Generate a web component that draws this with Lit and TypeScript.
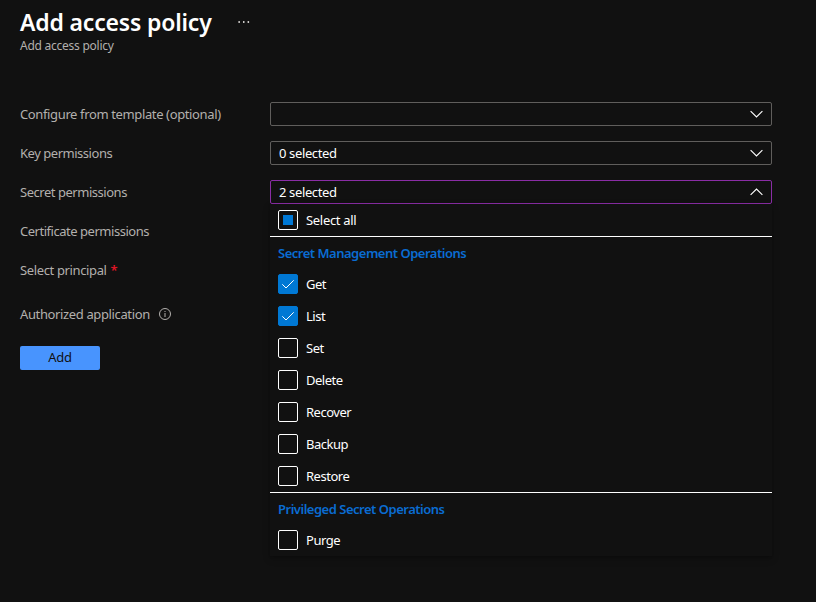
import { LitElement, html, css, svg } from "lit";
import { customElement, property } from "lit/decorators.js";
import { classMap } from "lit/directives/class-map.js";

type CheckState = "on" | "off" | "mixed";

@customElement("check-row")
class CheckRow extends LitElement {
  @property() label = "";
  @property() state: CheckState = "off";

  static styles = css`
    :host { display: flex; align-items: center; height: 32px; padding-left: 8px; gap: 8px; box-sizing: border-box; }
    .box { width: 20px; height: 20px; box-sizing: border-box; border: 1px solid #fff; border-radius: 2px; display: flex; align-items: center; justify-content: center; flex: none; }
    .box.on { background: #0078d4; border-color: #0078d4; }
    .fill { width: 10px; height: 10px; background: #0078d4; }
    svg { display: block; flex: none; }
    .text { color: #fff; line-height: 18px; white-space: nowrap; letter-spacing: -0.48px; }
    .text.mixed { letter-spacing: -0.31px; }
  `;

  render() {
    return html`
      <span class=${classMap({ box: true, on: this.state === "on" })}>
        ${this.state === "mixed" ? html`<span class="fill"></span>` : ""}
        ${this.state === "on"
          ? html`<svg width="18" height="18" viewBox="0 0 18 18" fill="none" stroke="#fff" stroke-width="1"><path d="M3.3 9.3L7 13L14.7 5.3" /></svg>`
          : ""}
      </span>
      <span class=${classMap({ text: true, mixed: this.state === "mixed" })}>${this.label}</span>
    `;
  }
}

@customElement("select-box")
class SelectBox extends LitElement {
  @property() value = "";
  @property({ type: Boolean }) open = false;

  static styles = css`
    :host { display: block; position: relative; width: 502px; }
    .field { height: 24px; box-sizing: border-box; border: 1px solid #605e5c; border-radius: 2px; display: flex; align-items: center; justify-content: space-between; padding: 0 8px; color: #fff; }
    .field.open { border-color: #8a2da5; }
    .value { line-height: 18px; letter-spacing: -0.37px; }
    svg { display: block; }
    .menu { position: absolute; top: 24px; left: 0; right: 0; background: #111; box-shadow: 0 3px 7px rgba(0, 0, 0, 0.22), 0 1px 2px rgba(0, 0, 0, 0.15); }
  `;

  render() {
    const path = this.open ? svg`<path d="M0.6 6.9L6.5 1L12.4 6.9" />` : svg`<path d="M0.6 1.1L6.5 7L12.4 1.1" />`;
    return html`
      <div class=${classMap({ field: true, open: this.open })}>
        <span class="value">${this.value}</span>
        <svg width="13" height="8" viewBox="0 0 13 8" fill="none" stroke="#fff" stroke-width="1.1">${path}</svg>
      </div>
      ${this.open ? html`<div class="menu"><slot></slot></div>` : ""}
    `;
  }
}

@customElement("app-root")
class AppRoot extends LitElement {
  static styles = css`
    :host { display: block; width: 816px; height: 602px; overflow: hidden; box-sizing: border-box; padding: 0 20px; background: #111; color: #b3b0ad; font: 13px/18px "Noto Sans", "Open Sans", sans-serif; letter-spacing: -0.37px; }
    .header { display: flex; align-items: center; height: 36px; padding-top: 4px; gap: 26px; }
    h1 { margin: 0; font-size: 23px; line-height: 30px; font-weight: 600; color: #fff; letter-spacing: -0.18px; white-space: nowrap; }
    .sub { font-size: 12px; line-height: 16px; margin-top: -2px; letter-spacing: -0.25px; }
    .form { margin-top: 48px; }
    .row { display: flex; align-items: center; height: 24px; margin-bottom: 15px; }
    .row.principal { margin-bottom: 20px; }
    .label { width: 250px; display: flex; align-items: center; white-space: nowrap; }
    .label.tight { letter-spacing: -0.47px; }
    .star { color: #e01525; font-weight: 600; margin-left: 4px; }
    .info { margin-left: 9px; }
    .group { border-top: 1px solid #fff; height: 31px; line-height: 32px; padding-left: 8px; color: #0a6cd2; font-weight: 600; letter-spacing: -0.49px; }
    .button { width: 80px; height: 24px; margin-top: 20px; border: 0; border-radius: 2px; padding: 0 0 2px; background: #4894fe; color: #111; font: inherit; letter-spacing: -0.2px; display: block; }
  `;

  private groups: { title: string; items: { name: string; state: CheckState }[] }[] = [
    {
      title: "Secret Management Operations",
      items: [
        { name: "Get", state: "on" },
        { name: "List", state: "on" },
        { name: "Set", state: "off" },
        { name: "Delete", state: "off" },
        { name: "Recover", state: "off" },
        { name: "Backup", state: "off" },
        { name: "Restore", state: "off" },
      ],
    },
    { title: "Privileged Secret Operations", items: [{ name: "Purge", state: "off" }] },
  ];

  render() {
    return html`
      <div class="header">
        <h1>Add access policy</h1>
        <svg width="12" height="4" viewBox="0 0 12 4" fill="#c8c6c4">
          <rect x="0.4" y="1" width="1.5" height="2" /><rect x="5" y="1" width="1.5" height="2" /><rect x="9.6" y="1" width="1.5" height="2" />
        </svg>
      </div>
      <div class="sub">Add access policy</div>
      <div class="form">
        <div class="row"><span class="label">Configure from template (optional)</span><select-box></select-box></div>
        <div class="row"><span class="label tight">Key permissions</span><select-box value="0 selected"></select-box></div>
        <div class="row">
          <span class="label tight">Secret permissions</span>
          <select-box value="2 selected" open>
            <check-row label="Select all" state="mixed"></check-row>
            ${this.groups.map(
              (g) => html`<div class="group">${g.title}</div>
                ${g.items.map((i) => html`<check-row label=${i.name} state=${i.state}></check-row>`)}`
            )}
          </select-box>
        </div>
        <div class="row"><span class="label tight">Certificate permissions</span></div>
        <div class="row principal"><span class="label">Select principal<span class="star">*</span></span></div>
        <div class="row">
          <span class="label">Authorized application
            <svg class="info" width="12" height="12" viewBox="0 0 12 12" fill="none" stroke="#b3b0ad" stroke-width="1">
              <circle cx="6" cy="6" r="5.5" /><path d="M6 5V9M6 3V4" />
            </svg>
          </span>
        </div>
      </div>
      <button class="button">Add</button>
    `;
  }
}
